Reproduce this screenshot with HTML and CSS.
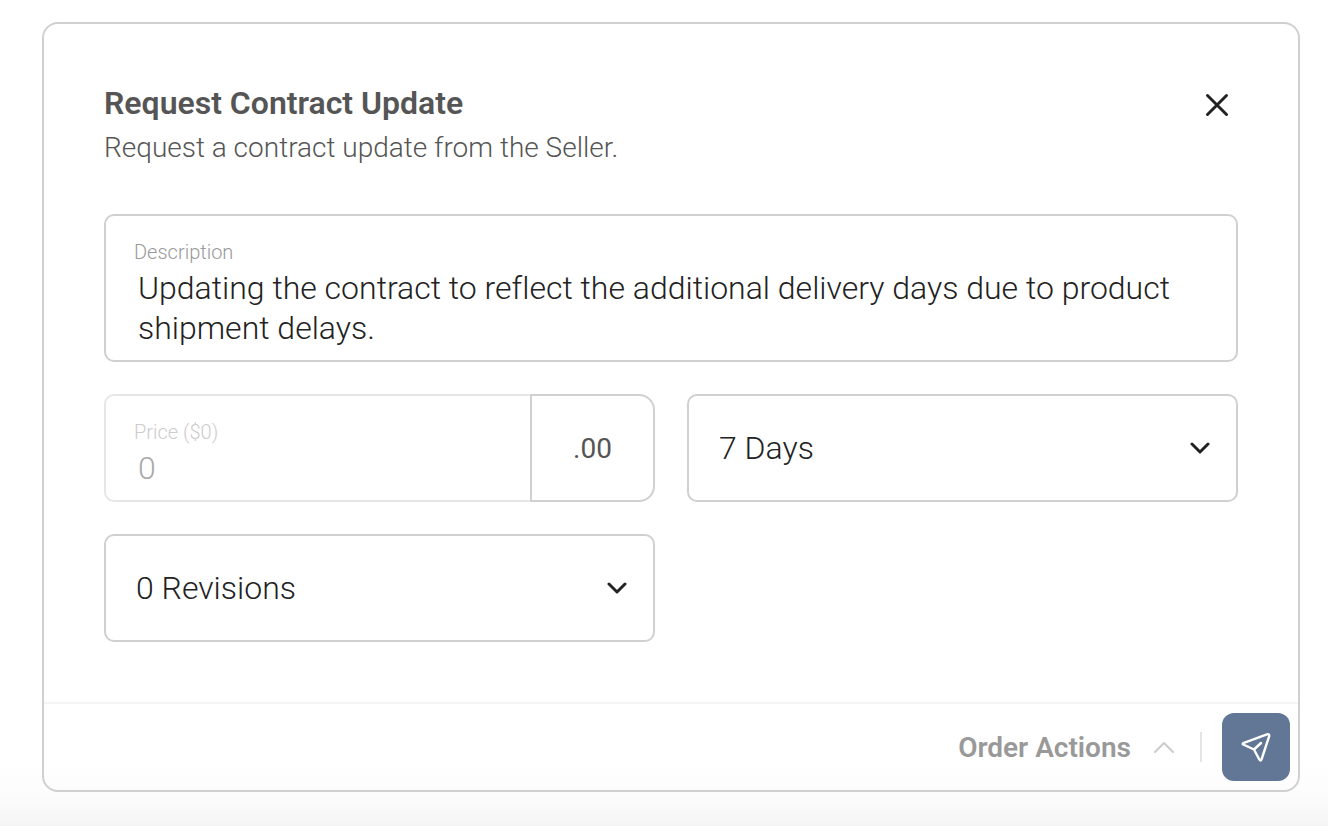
FILE: index.html
```html
<!DOCTYPE html>
<html lang="en">
<head>
    <meta charset="UTF-8">
    <meta name="viewport" content="width=device-width, initial-scale=1.0">
    <title>Request Contract Update</title>
    <link rel="stylesheet" href="styles.css">
</head>
<body>
    <form class="card">
        <div class="card-body">
            <header class="card-header">
                <div>
                    <h1>Request Contract Update</h1>
                    <p class="subtitle">Request a contract update from the Seller.</p>
                </div>
                <button type="button" class="close-btn" aria-label="Close">
                    <svg width="24" height="24" viewBox="0 0 24 24" fill="none" stroke="currentColor" stroke-width="3" stroke-linecap="round">
                        <path d="M2.5 2.5l19 19M21.5 2.5l-19 19"/>
                    </svg>
                </button>
            </header>

            <div class="fields">
                <div class="field field-wide">
                    <label for="description">Description</label>
                    <textarea id="description" name="description" rows="2">Updating the contract to reflect the additional delivery days due to product shipment delays.</textarea>
                </div>

                <div class="price-group">
                    <div class="field field-disabled">
                        <label for="price">Price ($0)</label>
                        <input type="text" id="price" name="price" value="0" disabled>
                    </div>
                    <span class="cents">.00</span>
                </div>

                <div class="select-box">
                    <select id="days" name="days" aria-label="Delivery days">
                        <option>7 Days</option>
                    </select>
                    <svg class="chevron" width="20" height="12" viewBox="0 0 20 12" fill="none" stroke="currentColor" stroke-width="3" stroke-linecap="round" stroke-linejoin="round">
                        <path d="M2 2l8 8 8-8"/>
                    </svg>
                </div>

                <div class="select-box">
                    <select id="revisions" name="revisions" aria-label="Revisions">
                        <option>0 Revisions</option>
                    </select>
                    <svg class="chevron" width="20" height="12" viewBox="0 0 20 12" fill="none" stroke="currentColor" stroke-width="3" stroke-linecap="round" stroke-linejoin="round">
                        <path d="M2 2l8 8 8-8"/>
                    </svg>
                </div>
            </div>
        </div>

        <footer class="card-footer">
            <button type="button" class="actions-btn">
                Order Actions
                <svg width="20" height="12" viewBox="0 0 20 12" fill="none" stroke="#cccccc" stroke-width="2" stroke-linecap="round" stroke-linejoin="round">
                    <path d="M1 11l9-9 9 9"/>
                </svg>
            </button>
            <span class="divider"></span>
            <button type="submit" class="send-btn" aria-label="Send">
                <svg width="30" height="30" viewBox="0 0 30 30" fill="none" stroke="currentColor" stroke-width="2.4" stroke-linecap="round" stroke-linejoin="round">
                    <path d="M2.200 11.200L26 2.300q2.500-.6 2.200 1.800L20.500 27.500q-1 2-2.200 0L13 17.500 2.200 12.500q-1-.6 0-1.300zM13 17.500l7-6.500"/>
                </svg>
            </button>
        </footer>
    </form>
</body>
</html>
```
FILE: styles.css
```css
:root {
    --text-color: #222222;
    --heading-color: #555555;
    --muted-color: #999999;
    --border-color: #d0d0d0;
    --border-light: #e6e6e6;
    --primary-color: #617795;
}

* {
    box-sizing: border-box;
    margin: 0;
    padding: 0;
}

body {
    min-height: 100vh;
    padding: 22px 28px 34px 42px;
    font-family: Roboto, 'Open Sans', sans-serif;
    font-weight: 300;
    font-variant-ligatures: none;
    color: var(--text-color);
    background: linear-gradient(to top, #f5f5f5, #fbfbfb 26px, #ffffff 60px) #ffffff;
}

button,
input,
select,
textarea {
    font: inherit;
    font-variant-ligatures: none;
    color: inherit;
    background: none;
    border: none;
    outline: none;
}

button {
    cursor: pointer;
}

svg {
    display: block;
    flex: none;
}

.card {
    border: 2px solid var(--border-color);
    border-radius: 16px;
}

.card-body {
    padding: 60px;
}

.card-header {
    display: flex;
    justify-content: space-between;
    align-items: flex-start;
    margin-bottom: 46px;
    color: var(--heading-color);
}

h1 {
    font-size: 32px;
    line-height: 38px;
    font-weight: 600;
}

.subtitle {
    padding-top: 6px;
    font-size: 28px;
    line-height: 40px;
}

.close-btn {
    padding: 9px;
    color: var(--text-color);
}

.fields {
    display: grid;
    grid-template-columns: 1fr 1fr;
    gap: 32px;
}

.field {
    flex: 1;
    min-width: 0;
    padding: 24px 28px 12px;
    border: 2px solid var(--border-color);
    border-radius: 10px;
}

.field-wide {
    grid-column: 1 / -1;
}

.field label {
    display: block;
    margin-bottom: 4px;
    font-size: 20px;
    line-height: 24px;
    color: var(--muted-color);
}

.field input,
.field textarea {
    display: block;
    width: 100%;
    padding: 0 4px;
    font-size: 32px;
    line-height: 40px;
    resize: none;
    overflow: hidden;
}

.field input {
    height: 40px;
}

.price-group {
    display: flex;
}

.field-disabled {
    border-color: var(--border-light);
    border-right: none;
    border-radius: 10px 0 0 10px;
}

.field-disabled label {
    color: #cccccc;
}

.field-disabled input {
    color: #aaaaaa;
}

.cents {
    display: flex;
    align-items: center;
    justify-content: center;
    width: 125px;
    border: 2px solid var(--border-color);
    border-radius: 0 16px 16px 0;
    font-size: 28px;
    font-weight: 400;
    color: var(--heading-color);
}

.select-box {
    position: relative;
    height: 108px;
}

.select-box select {
    width: 100%;
    height: 100%;
    padding: 0 60px 0 30px;
    font-size: 32px;
    border: 2px solid var(--border-color);
    border-radius: 10px;
    appearance: none;
}

.chevron {
    position: absolute;
    top: 48px;
    right: 28px;
    pointer-events: none;
}

.card-footer {
    display: flex;
    align-items: center;
    justify-content: flex-end;
    gap: 20px;
    height: 88px;
    padding-right: 8px;
    border-top: 2px solid #f4f4f4;
}

.actions-btn {
    display: flex;
    align-items: center;
    gap: 23px;
    padding-right: 6px;
    font-size: 28px;
    font-weight: 600;
    color: var(--muted-color);
}

.divider {
    width: 2px;
    height: 30px;
    background-color: #e4e4e4;
}

.send-btn {
    display: flex;
    align-items: center;
    justify-content: center;
    width: 68px;
    height: 68px;
    border-radius: 12px;
    color: #ffffff;
    background-color: var(--primary-color);
}

@media (max-width: 800px) {
    .fields {
        grid-template-columns: 1fr;
    }

    .card-body {
        padding: 30px;
    }
}
```
